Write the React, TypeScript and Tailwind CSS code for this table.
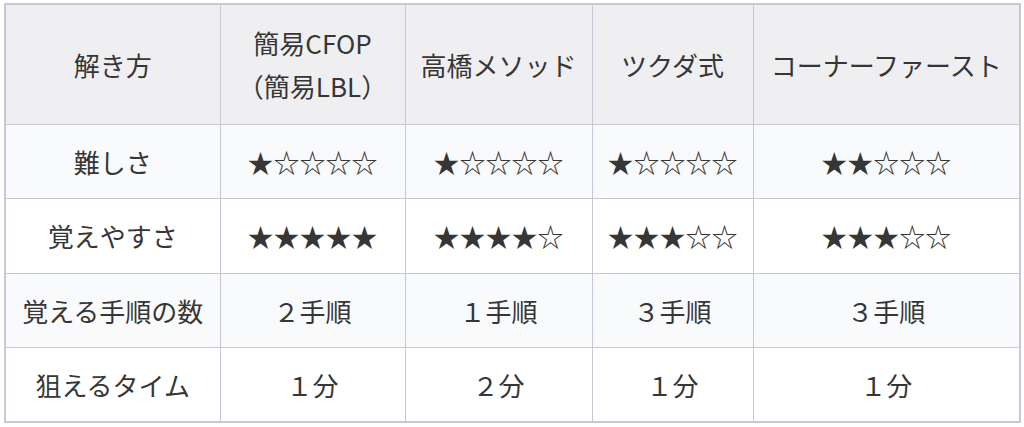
const headers = ["解き方", "簡易CFOP\n（簡易LBL）", "高橋メソッド", "ツクダ式", "コーナーファースト"];

const rows: string[][] = [
  ["難しさ", "★☆☆☆☆", "★☆☆☆☆", "★☆☆☆☆", "★★☆☆☆"],
  ["覚えやすさ", "★★★★★", "★★★★☆", "★★★☆☆", "★★★☆☆"],
  ["覚える手順の数", "２手順", "１手順", "３手順", "３手順"],
  ["狙えるタイム", "１分", "２分", "１分", "１分"],
];

const widths = ["w-[215px]", "w-[185px]", "w-[187px]", "w-[161px]", "w-[267px]"];

export default function App() {
  return (
    <div className="min-h-[427px] bg-white pl-[4px] pt-[3px]">
      <table
        className="w-[1015px] table-fixed border-collapse border-2 border-[#c9c7d6] text-[26px] leading-[43px] text-[#363636]"
        style={{ fontFamily: '"Noto Sans CJK JP", "Noto Sans", sans-serif' }}
      >
        <colgroup>
          {widths.map((w, i) => (
            <col key={i} className={w} />
          ))}
        </colgroup>
        <thead>
          <tr className="h-[120px] bg-[#efeff2]">
            {headers.map((h, i) => (
              <th key={i} className="border border-[#c9c7d6] px-2 text-center align-middle font-normal whitespace-pre-line">
                {h}
              </th>
            ))}
          </tr>
        </thead>
        <tbody>
          {rows.map((r, ri) => (
            <tr key={ri} className={ri % 2 === 0 ? "h-[74.5px] bg-[#f9fafc]" : "h-[74.5px] bg-white"}>
              {r.map((c, ci) => (
                <td key={ci} className="border border-[#c9c7d6] px-2 text-center align-middle">
                  {c}
                </td>
              ))}
            </tr>
          ))}
        </tbody>
      </table>
    </div>
  );
}
